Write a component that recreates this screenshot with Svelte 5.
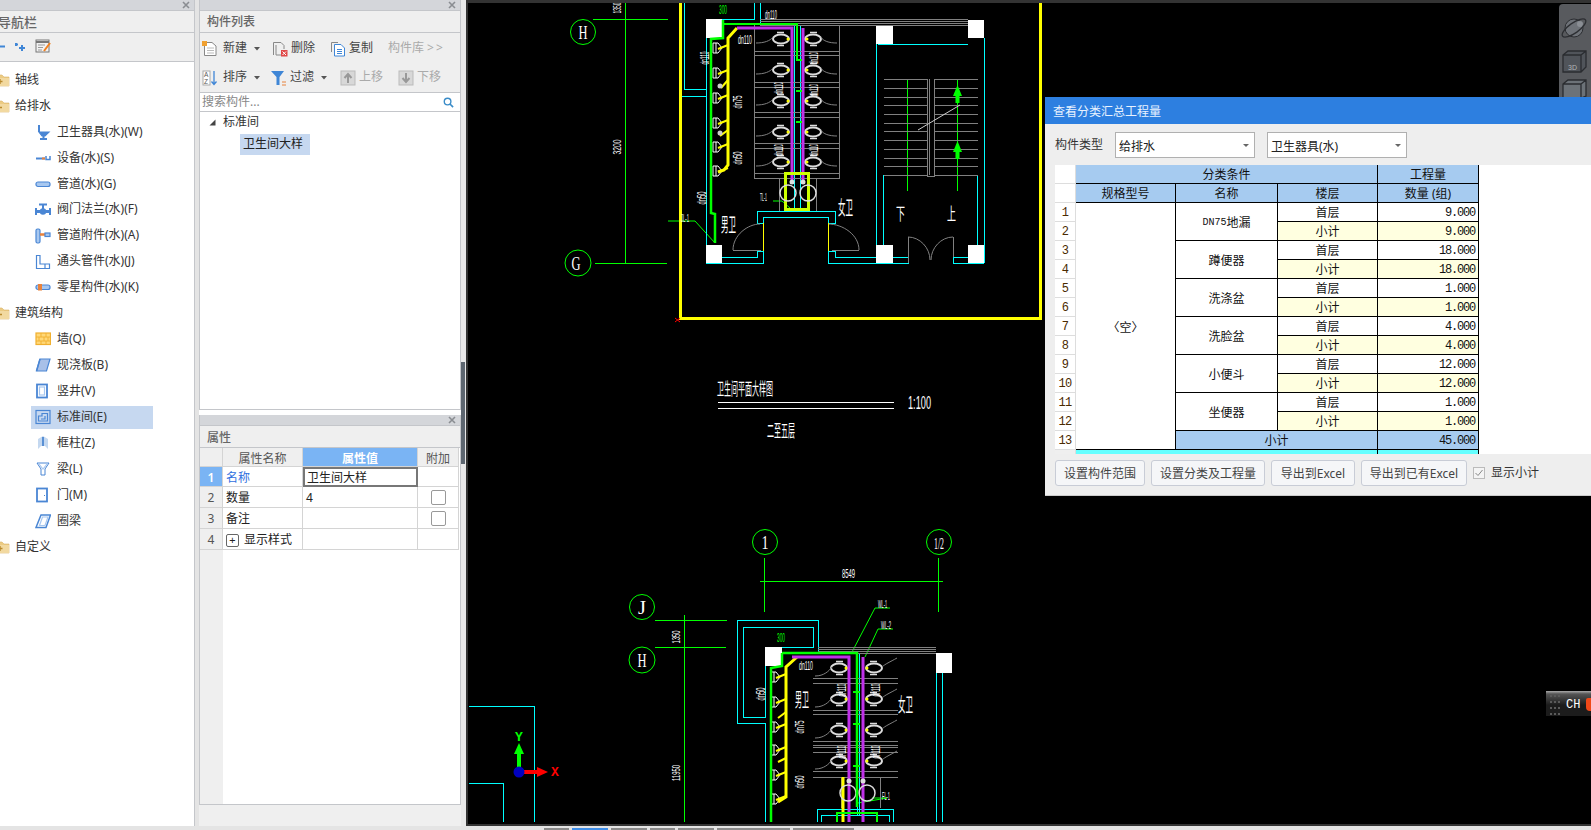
<script>
  const tree = [
    { label: '轴线', top: 'plus' },
    { label: '给排水', top: 'open' },
    { label: '卫生器具(水)(W)', icon: 'sanitary' },
    { label: '设备(水)(S)', icon: 'device' },
    { label: '管道(水)(G)', icon: 'pipe' },
    { label: '阀门法兰(水)(F)', icon: 'valve' },
    { label: '管道附件(水)(A)', icon: 'fitting' },
    { label: '通头管件(水)(J)', icon: 'elbow' },
    { label: '零星构件(水)(K)', icon: 'misc' },
    { label: '建筑结构', top: 'open' },
    { label: '墙(Q)', icon: 'wall' },
    { label: '现浇板(B)', icon: 'slab' },
    { label: '竖井(V)', icon: 'shaft' },
    { label: '标准间(E)', icon: 'room', selected: true },
    { label: '框柱(Z)', icon: 'column' },
    { label: '梁(L)', icon: 'beam' },
    { label: '门(M)', icon: 'door' },
    { label: '圈梁', icon: 'ring' },
    { label: '自定义', top: 'plus' }
  ];

  const groups = [
    { latin: 'DN75', name: '地漏', value: '9.000' },
    { name: '蹲便器', value: '18.000' },
    { name: '洗涤盆', value: '1.000' },
    { name: '洗脸盆', value: '4.000' },
    { name: '小便斗', value: '12.000' },
    { name: '坐便器', value: '1.000' }
  ];

  const cyan = [
    '684,3 684,89 706,89', '681,96 706,96', '706,19 706,263 763,263 763,251 757,251 757,257 722,257',
    '706,19 754,19 754,3', '760,3 760,23', '757,211 835,211 835,223 828,223 828,217 763,217 763,223 757,223 757,211',
    '828,263 828,251 835,251 835,257 877,257', '828,263 908,263 908,257 877,257', '876,44 876,245', '883,175 883,245',
    '977,175 977,245', '984,38 984,263', '878,44 968,44', '953,257 968,257', '953,257 953,263 984,263',
    '794,26 794,210', '800,26 800,210', '712,245 712,257',
    '469,706 534,706 534,822', '469,783 503,783 503,822',
    '737,620 818,620 818,651', '737,620 737,723 765,723 765,822', '743,627 813,627 813,647 782,647',
    '743,627 743,717 765,717 765,647', '936,653 936,822', '942,653 942,822', '857,653 857,815', '859,653 859,815',
    '817,822 817,809 893,809 893,822', '821,822 821,815 889,815 889,822', '771,653 782,653'
  ];
  const gray = [
    '754,25 754,178 839,178 839,25', '754,51 839,51', '754,55 839,55', '754,82 839,82', '754,87 839,87', '754,112 839,112',
    '754,117 839,117', '754,143 839,143', '754,148 839,148', '754,173 839,173',
    '779,178 779,211', '816,178 816,211', '733,250 761,250', '832,250 859,250', '908,237 908,263', '953,237 953,257',
    '813,678 898,678', '813,683 898,683', '813,710 898,710', '813,714 898,714', '813,741 898,741', '813,745 898,745',
    '813,747 898,747', '813,752 898,752', '813,771 898,771', '813,777 898,777', '841,777 841,808', '880,777 880,808',
    '760,19 968,19', '760,21 968,21', '760,23 968,23', '760,25 968,25',
    '818,647 936,647', '818,649 936,649', '818,651 936,651', '818,653 936,653'
  ];
  const treads = [79, 88, 97, 105, 114, 123, 131, 140, 149, 158, 166, 175];
  const stallYs = [39, 70, 101, 132, 162];
  const stall2Ys = [668, 699, 730, 761];
  const urinals = [48, 73, 98, 123, 147, 171];
  const urinals2 = [677, 702, 727, 750, 775, 799];
  const rings = [
    [583, 32, 12.5], [578, 263, 13], [765, 542, 12.5], [939, 542, 12.5], [642, 607, 12.5], [642, 660, 13]
  ];
  const ringText = [
    ['H', 583, 39, 18, 9], ['G', 576, 270, 18, 9], ['1', 765, 549, 18, 7], ['1/2', 939, 549, 16, 10], ['J', 642, 614, 18, 8], ['H', 642, 667, 18, 9]
  ];
  const cadV = [
    ['1350', 621, 8, 11, 11, '#fff'], ['3200', 621, 147, 11, 15, '#fff'], ['dn110', 709, 58, 13, 13, '#fff'], ['dn75', 742, 102, 13, 13, '#fff'],
    ['dn50', 742, 158, 13, 13, '#fff'], ['dn50', 706, 198, 13, 13, '#fff'], ['dn110', 818, 58, 13, 12, '#fff'], ['dn110', 783, 88, 13, 12, '#fff'],
    ['dn110', 818, 90, 13, 12, '#fff'], ['dn110', 783, 150, 13, 12, '#fff'], ['dn110', 818, 150, 13, 12, '#fff'],
    ['1350', 680, 637, 11, 13, '#fff'], ['11950', 680, 773, 11, 16, '#fff'], ['dn50', 765, 694, 13, 13, '#fff'], ['dn75', 804, 727, 13, 13, '#fff'],
    ['dn50', 804, 782, 13, 13, '#fff'], ['dn110', 846, 690, 13, 13, '#fff'], ['dn110', 880, 690, 13, 13, '#fff'], ['dn110', 846, 752, 13, 13, '#fff'], ['dn110', 880, 752, 13, 13, '#fff']
  ];
  const cadH = [
    ['300', 719, 14, 13, 8, '#00ff00'], ['dn110', 738, 44, 13, 14, '#fff'], ['dn110', 765, 19, 13, 12, '#fff'], ['TL-1', 760, 201, 11, 7, '#fff'],
    ['JL-1', 681, 222, 11, 8, '#fff'], ['男卫', 721, 232, 19, 15, '#fff'], ['女卫', 838, 215, 19, 15, '#fff'], ['下', 896, 220, 17, 9, '#fff'],
    ['上', 947, 220, 17, 9, '#fff'], ['卫生间平面大样图', 717, 395, 17, 56, '#fff'], ['1:100', 908, 409, 18, 23, '#fff'],
    ['二至五层', 767, 437, 17, 28, '#fff'], ['8549', 842, 578, 13, 13, '#fff'], ['300', 777, 642, 12, 8, '#00ff00'],
    ['WL-1', 878, 608, 11, 9, '#fff'], ['WL-2', 881, 629, 11, 10, '#fff'], ['FL-1', 882, 800, 11, 8, '#fff'], ['男卫', 795, 707, 19, 14, '#fff'],
    ['女卫', 898, 712, 19, 15, '#fff'], ['dn110', 799, 670, 13, 14, '#fff']
  ];
</script>

{#snippet closeX()}
  <svg class="close" viewBox="0 0 8 8" width="8" height="8"><path d="M1 1L7 7M7 1L1 7" stroke="#8a8d92" stroke-width="1.6" /></svg>
{/snippet}

{#snippet folder(kind)}
  <svg class="folder" viewBox="0 0 16 14" width="16" height="14">
    <path d="M0 2H8L10 4H15V13H0Z" fill="#eccb83" stroke="#d9b469" stroke-width=".6" />
    <rect x="0" y="5" width="15" height="8" fill="#f2d9a0" />
    {#if kind === 'plus'}<path d="M6 6V11M3.5 8.5H8.5" stroke="#b98a2e" stroke-width="1.4" />{:else}<path d="M2 8.5H8" stroke="#b98a2e" stroke-width="1.6" />{/if}
  </svg>
{/snippet}

{#snippet icon(name)}
  <svg class="ticon" viewBox="0 0 16 16" width="16" height="16" fill="none" stroke="#4a86d4" stroke-width="1.2">
    {#if name === 'sanitary'}
      <path d="M4 1V8" stroke-width="2" /><path d="M4 8H14L10 12H7Z" fill="#4a86d4" /><path d="M5 15H12" stroke-width="2" /><path d="M8.5 12V15" stroke-width="2" />
    {:else if name === 'device'}
      <path d="M1 8.5H10" stroke-width="2" /><path d="M7 8.5H10" stroke="#e8823c" stroke-width="2" /><path d="M11 6V9.5H15V6" stroke-width="1.5" />
    {:else if name === 'pipe'}
      <rect x="1" y="6" width="14" height="4.5" rx="2" fill="#a8c8f0" />
    {:else if name === 'valve'}
      <path d="M8 3V7M4 2.5H12" stroke-width="2" /><path d="M1 6V13M15 6V13" stroke-width="2" /><path d="M1 9.5H15" stroke-width="3" /><circle cx="8" cy="9.5" r="2.6" fill="#4a86d4" />
    {:else if name === 'fitting'}
      <rect x="1" y="1" width="4" height="14" rx="1.5" fill="#a8c8f0" /><path d="M5 6.5H10" stroke="#e8823c" stroke-width="2.5" /><rect x="10" y="5" width="5" height="3.5" fill="#a8c8f0" />
    {:else if name === 'elbow'}
      <path d="M1.5 1.5H5V10H14.5V14.5H1.5Z" fill="#fff" /><path d="M10 10V14.5" />
    {:else if name === 'misc'}
      <rect x="1" y="6" width="14" height="4.5" rx="2" fill="#a8c8f0" /><rect x="3" y="5" width="4" height="6.5" fill="#e8823c" stroke="none" />
    {:else if name === 'wall'}
      <rect x="1" y="2" width="14.5" height="11.5" fill="#ffd878" stroke="#f0b030" /><path d="M1 6H15M1 10H15M6 2V6M11 2V6M4 6V10M9 6V10M13 6V10M6 10V13.5M11 10V13.5" stroke="#f0b030" stroke-width=".9" />
    {:else if name === 'slab'}
      <path d="M5 2H15L11.5 14H1.5Z" fill="#a8c0e8" /><path d="M5 2L1.5 14" stroke-width="1.5" />
    {:else if name === 'shaft'}
      <rect x="2" y="1.5" width="10" height="13" stroke-width="1.8" /><rect x="4.5" y="4" width="5" height="8" stroke="#a8c8f0" />
    {:else if name === 'room'}
      <rect x="1" y="1.5" width="14" height="13" stroke-width="1.2" /><path d="M3.5 12V7H7V4.5H12.5V12Z" /><path d="M6 10H10V7" />
    {:else if name === 'column'}
      <path d="M3 4L8 1L13 4V14L10 11H6L3 14Z" fill="#c4d8f0" stroke="none" /><path d="M8 2V11" stroke="#5a90d4" stroke-width="2" />
    {:else if name === 'beam'}
      <path d="M2 2H14L10 8V14H6V8Z" stroke-width="1" /><path d="M4 3L8 8L12 3" stroke="#a8c8f0" />
    {:else if name === 'door'}
      <rect x="2" y="1.5" width="10" height="13" stroke-width="1.8" /><path d="M9.5 8V9" stroke-width="1" />
    {:else if name === 'ring'}
      <path d="M6 2H15.5L11 14.5H1Z" stroke-width="1.5" /><path d="M7.5 4H13L10 12.5H4.5Z" stroke="#a8c8f0" />
    {/if}
  </svg>
{/snippet}

{#snippet panelHead(title)}
  <div class="strip">{@render closeX()}</div>
  <div class="phead">{title}</div>
{/snippet}

{#snippet caret()}
  <svg class="caret" viewBox="0 0 6 4" width="6" height="4"><path d="M0 0H6L3 3.5Z" fill="#555" /></svg>
{/snippet}

<div class="app">
  <div class="main">
    <aside class="nav">
      {@render panelHead('导航栏')}
      <div class="navtools">
        <svg viewBox="0 0 54 16" width="54" height="16" fill="none">
          <path d="M0 8.5H5" stroke="#3f86d6" stroke-width="2" />
          <path d="M16 5V8M15 6.5H18M22 7V13M19 10H25" stroke="#3f86d6" stroke-width="2" />
          <rect x="36" y="2" width="13" height="12" fill="#f2f2f2" stroke="#777" />
          <path d="M36 4H49" stroke="#777" stroke-width="2" />
          <path d="M38 7H45M38 9.5H43M38 12H42" stroke="#999" />
          <path d="M44 13L50 5" stroke="#f08020" stroke-width="2" />
        </svg>
      </div>
      <div class="tree">
        {#each tree as row}
          <div class="row" class:toprow={row.top} class:sel={row.selected}>
            {#if row.top}
              {@render folder(row.top)}
            {:else}
              {@render icon(row.icon)}
            {/if}
            <span>{row.label}</span>
          </div>
        {/each}
      </div>
    </aside>

    <div class="mid">
      <section class="listp">
        {@render panelHead('构件列表')}
        <div class="tools">
          <div class="trow">
            <span class="tool w70 first"><svg viewBox="0 0 16 16" width="16" height="16" fill="none"><path d="M2.5 1.5H10L14 5V14.5H2.5Z" fill="#fff" stroke="#888" /><path d="M5 7H12M5 9.5H12M5 12H12" stroke="#bbb" /><rect x="0" y="0" width="5" height="5" fill="#f0a030" /></svg><b>新建</b>{@render caret()}</span>
            <span class="tool w58"><svg viewBox="0 0 16 16" width="16" height="16" fill="none"><path d="M1.5 14V1.5H9L12 4.5V8" stroke="#888" /><path d="M4 4V14H9" stroke="#888" /><rect x="9" y="9" width="6.5" height="6.5" fill="#e04848" /><path d="M10.5 10.5L14 14M14 10.5L10.5 14" stroke="#fff" /></svg><b>删除</b></span>
            <span class="tool w58"><svg viewBox="0 0 16 16" width="16" height="16" fill="none"><path d="M1.5 11V1.5H8" stroke="#888" /><path d="M4.5 3.5H11L14.5 7V15H4.5Z" fill="#fff" stroke="#3f86d6" /><path d="M7 8.5H12M7 10.5H12M7 12.5H12" stroke="#3f86d6" /></svg><b>复制</b></span>
            <span class="tool dim">构件库<em>&gt;&gt;</em></span>
          </div>
          <div class="trow">
            <span class="tool w69 first"><svg viewBox="0 0 16 16" width="16" height="16" fill="none"><rect x="1" y="1" width="7" height="14" fill="#fff" stroke="#aaa" /><text x="2" y="7" class="az">A</text><text x="2" y="14" class="az">Z</text><path d="M12 1V14M9.5 11.5L12 14.5L14.5 11.5" stroke="#3f86d6" stroke-width="1.3" /></svg><b>排序</b>{@render caret()}</span>
            <span class="tool w69"><svg viewBox="0 0 16 16" width="16" height="16" fill="none"><path d="M0 1H13L8.5 7V15H5.5V7Z" fill="#3f86d6" /><path d="M11 12H15M11 15H15" stroke="#e8823c" /></svg><b>过滤</b>{@render caret()}</span>
            <span class="tool w58 dim"><svg viewBox="0 0 16 16" width="16" height="16" fill="none"><rect x="1" y="1" width="14" height="14" fill="#d8d8d8" stroke="#bbb" /><path d="M8 13V5M4.5 8L8 4L11.5 8" stroke="#999" stroke-width="2" /></svg><b>上移</b></span>
            <span class="tool dim"><svg viewBox="0 0 16 16" width="16" height="16" fill="none"><rect x="1" y="1" width="14" height="14" fill="#d8d8d8" stroke="#bbb" /><path d="M8 3V11M4.5 8L8 12L11.5 8" stroke="#999" stroke-width="2" /></svg><b>下移</b></span>
          </div>
        </div>
        <div class="search">
          <span>搜索构件...</span>
          <svg viewBox="0 0 12 12" width="11" height="11" fill="none"><circle cx="5" cy="5" r="3.6" stroke="#3a8cc8" stroke-width="1.5" /><path d="M7.6 7.6L11 11" stroke="#3a8cc8" stroke-width="1.8" /></svg>
        </div>
        <div class="ltree">
          <div class="lroot"><svg viewBox="0 0 7 7" width="7" height="7"><path d="M6.5 0.5V6.5H0.5Z" fill="#444" /></svg><span>标准间</span></div>
          <div class="lchild">卫生间大样</div>
        </div>
      </section>

      <section class="propp">
        {@render panelHead('属性')}
        <div class="ptable">
          <div class="pc head"></div><div class="pc head">属性名称</div><div class="pc head on">属性值</div><div class="pc head">附加</div>
          <div class="pc num on">1</div><div class="pc lab link">名称</div><div class="pc editing">卫生间大样</div><div class="pc"></div>
          <div class="pc num">2</div><div class="pc lab">数量</div><div class="pc lab">4</div><div class="pc ctr"><i class="chk"></i></div>
          <div class="pc num">3</div><div class="pc lab">备注</div><div class="pc"></div><div class="pc ctr"><i class="chk"></i></div>
          <div class="pc num">4</div><div class="pc lab"><i class="plus">+</i>显示样式</div><div class="pc"></div><div class="pc"></div>
        </div>
        <div class="pfill"><div></div></div>
      </section>
      <div class="band"></div>
    </div>

    <div class="split"><div class="thumb"></div></div>

    <div class="canvas">
      <svg class="cad" viewBox="468 3 1123 820" width="1123" height="820" fill="none">
        <g stroke="#00ff00">
          {#each rings as r}<circle cx={r[0]} cy={r[1]} r={r[2]} />{/each}
          <path d="M593 19.5H668M625.5 3V263M595 263.5H667M620 19.5H631M620 263.5H631" />
          <path d="M764.5 558V612M938.5 558V612M760 581.5H943M655 620.5H727M684.5 615V822M655 647.5H726M679 620.5H690M679 647.5H690" />
          <path d="M907.5 80V191M957.5 80V191" />
          <path d="M875 608H890M875 608L852 652M878 629H893M878 629L865 657M668 221H695L715 243M773 201H782L790 208M872 798H887L858 803" />
        </g>
        <g stroke="#00ffff" stroke-width="1" shape-rendering="crispEdges">
          {#each cyan as p}<polyline points={p} />{/each}
        </g>
        <g stroke="#808080" stroke-width="1" shape-rendering="crispEdges">
          {#each gray as p}<polyline points={p} />{/each}
          {#each treads as y}<path d="M884 {y + 0.5}H927M934 {y + 0.5}H978" />{/each}
          <path d="M927 79V176H934V79M929.5 79V175" />
        </g>
        <g stroke="#808080" stroke-width="1">
          <path d="M733 250C733 235 748 224 760 224M828 224C843 224 859 235 859 250M908 237C920 237 930 248 930 260M953 237C941 237 931 248 931 260" />
        </g>
        <path d="M918 130L960 105" stroke="#ccc" />
        <path d="M763 223V251M828 223V251" stroke="#ffff00" shape-rendering="crispEdges" />
        <path d="M680 3V318M1040.5 3V318M679 318.5H1042" stroke="#ffff00" stroke-width="3" shape-rendering="crispEdges" />
        <path d="M718 402.5H894M718 408.5H894" stroke="#fff" stroke-width="1" shape-rendering="crispEdges" />
        <path d="M675 318L680 322M680 318L675 322" stroke="#ff0000" />

        <g fill="#fff">
          <rect x="706" y="19" width="16" height="19" /><rect x="706" y="245" width="16" height="18" />
          <rect x="876" y="245" width="17" height="18" /><rect x="968" y="245" width="16" height="18" />
          <rect x="876" y="26" width="17" height="18" /><rect x="968" y="20" width="16" height="18" />
          <rect x="765" y="647" width="17" height="19" /><rect x="936" y="653" width="16" height="20" />
        </g>

        {#each stallYs as y}
          <g stroke="#ddd">
            <ellipse cx="781" cy={y} rx="8" ry="4.5" stroke-width="2" /><ellipse cx="813" cy={y} rx="8" ry="4.5" stroke-width="2" />
            <path d="M777 {y - 6.5}H784M777 {y + 6.5}H784M810 {y - 6.5}H817M810 {y + 6.5}H817" stroke-width="1.5" />
          </g>
          <path d="M756 {y + 4}C764 {y + 4} 770 {y + 2} 773 {y - 2}M837 {y + 4}C829 {y + 4} 823 {y + 2} 821 {y - 2}" stroke="#808080" />
          <circle cx="788" cy={y} r="1.5" fill="#ffff00" /><circle cx="807" cy={y} r="1.5" fill="#ffff00" />
        {/each}
        {#each stall2Ys as y}
          <g stroke="#ddd">
            <ellipse cx="839" cy={y} rx="8" ry="4.5" stroke-width="2" /><ellipse cx="874" cy={y} rx="8" ry="4.5" stroke-width="2" />
            <path d="M836 {y - 6.5}H843M836 {y + 6.5}H843M870 {y - 6.5}H877M870 {y + 6.5}H877" stroke-width="1.5" />
          </g>
          <path d="M815 {y + 8}C824 {y + 8} 829 {y + 3} 832 {y - 1}M897 {y - 10}C890 {y - 6} 885 {y - 4} 882 {y - 1}" stroke="#808080" />
          <circle cx="846" cy={y} r="1.5" fill="#ffff00" /><circle cx="867" cy={y} r="1.5" fill="#ffff00" />
        {/each}

        {#each urinals as y}
          <path d="M713 {y - 5}H718L722 {y}L718 {y + 5}H713ZM716 {y - 5}V{y + 5}" stroke="#fff" />
          <path d="M718 {y + 1}L728 {y - 3}" stroke="#ffff00" stroke-width="2" />
        {/each}
        {#each urinals2 as y}
          <path d="M771 {y - 5}H776L780 {y}L776 {y + 5}H771ZM774 {y - 5}V{y + 5}" stroke="#fff" />
          <path d="M776 {y + 1}L786 {y - 3}" stroke="#ffff00" stroke-width="2" />
        {/each}

        <path d="M737 28L728 38V165L724 170L718 172" stroke="#ffff00" stroke-width="3" />
        <path d="M797 657L786 667V797L778 802" stroke="#ffff00" stroke-width="3" />
        <path d="M728 80L721 88M728 130L720 136M786 712L778 718M786 758L778 762" stroke="#ffff00" stroke-width="2" />
        <circle cx="720" cy="86" r="2.5" fill="#ccc" /><circle cx="720" cy="133" r="2.5" fill="#ccc" />
        <path d="M737 28H792V180M803 28V180" stroke="#c030e8" stroke-width="3" />
        <path d="M792 657H849V822M863 657V822" stroke="#c030e8" stroke-width="3" />
        <rect x="785.5" y="173.5" width="23" height="36" stroke="#ccff00" stroke-width="3" />
        <path d="M843 777V822" stroke="#ffff00" stroke-width="3" />
        <circle cx="788" cy="193" r="8" stroke="#ddd" stroke-width="1.5" /><circle cx="808" cy="193" r="8" stroke="#ddd" stroke-width="1.5" />
        <circle cx="792" cy="182" r="2.5" fill="#ddd" /><circle cx="803" cy="182" r="2.5" fill="#ddd" />
        <circle cx="848" cy="793" r="8" stroke="#ddd" stroke-width="1.5" /><circle cx="867" cy="793" r="8" stroke="#ddd" stroke-width="1.5" />
        <circle cx="849" cy="781" r="2.5" fill="#ddd" /><circle cx="863" cy="781" r="2.5" fill="#ddd" />

        <path d="M723 20V38L711 39V213L715 214V243" stroke="#00ff00" stroke-width="2.5" />
        <path d="M723 24H797V60" stroke="#00ff00" stroke-width="2" />
        <path d="M782 653H857V807M782 653V666L771 668V822" stroke="#00ff00" stroke-width="2.5" />
        <path d="M796 60H802M796 91H802M796 122H802M853 692H860M853 724H860M853 766H860M837 812V822M837 813H877V822" stroke="#00ff00" stroke-width="2" />
        <path d="M957.5 95V103M957.5 151V159" stroke="#00ff00" stroke-width="4" />
        <path d="M957.5 85L962 96H953ZM957.5 141L962 152H953Z" fill="#00ff00" />

        {#each ringText as t}
          <text x={t[1]} y={t[2]} font-size={t[3]} textLength={t[4]} lengthAdjust="spacingAndGlyphs" class="ct ser" text-anchor="middle">{t[0]}</text>
        {/each}
        {#each cadH as t}
          <text x={t[1]} y={t[2]} font-size={t[3]} textLength={t[4]} lengthAdjust="spacingAndGlyphs" class="ct" fill={t[5]}>{t[0]}</text>
        {/each}
        {#each cadV as t}
          <text transform="rotate(-90 {t[1]} {t[2]})" x={t[1] - t[4] / 2} y={t[2]} font-size={t[3]} textLength={t[4]} lengthAdjust="spacingAndGlyphs" class="ct" fill={t[5]}>{t[0]}</text>
        {/each}

        <path d="M519 772V754" stroke="#00ff00" stroke-width="4" /><path d="M519 743L524 754H514Z" fill="#00ff00" />
        <path d="M519 772H537" stroke="#ff0000" stroke-width="4" /><path d="M548 772L537 767V777Z" fill="#ff0000" />
        <circle cx="519" cy="772" r="5.5" fill="#0000c0" />
        <text x="515" y="741" class="axis" fill="#00ff00">Y</text>
        <text x="551" y="776" class="axis" fill="#ff0000">X</text>
      </svg>

      <div class="gadget">
        <svg viewBox="0 0 32 94" width="32" height="94" fill="none">
          <circle cx="15" cy="24" r="9" fill="#6e7278" stroke="#2c2e32" />
          <ellipse cx="15" cy="24" rx="14" ry="5" transform="rotate(-35 15 24)" stroke="#2c2e32" stroke-width="1.3" />
          <circle cx="21" cy="20" r="3" fill="#8a8e94" />
          <path d="M4 51L9 47H27V63L22 68H4ZM4 51H22V68M22 51L27 47" fill="#50545a" stroke="#2a2c30" stroke-width="1.3" />
          <text x="9" y="66" class="g3d">3D</text>
          <path d="M4 80L9 76H27V92L22 94H4ZM4 80H22V94M22 80L27 76" fill="#6c7278" stroke="#2a2c30" stroke-width="1.3" />
        </svg>
      </div>

      <div class="dialog">
        <div class="dtitle">查看分类汇总工程量</div>
        <div class="dform">
          <span class="dlabel">构件类型</span>
          <div class="combo w140">给排水<i></i></div>
          <div class="combo w140">卫生器具(水)<i></i></div>
        </div>
        <div class="dbody">
          <div class="sheet">
            <div class="c rn"></div><div class="c hd s3">分类条件</div><div class="c hd">工程量</div>
            <div class="c rn"></div><div class="c hd">规格型号</div><div class="c hd">名称</div><div class="c hd">楼层</div><div class="c hd">数量 (组)</div>
            {#each groups as g, i}
              <div class="c rn">{i * 2 + 1}</div>
              {#if i === 0}<div class="c spec">〈空〉</div>{/if}
              <div class="c nm">{#if g.latin}<span class="latin">{g.latin}</span>{/if}{g.name}</div>
              <div class="c">首层</div><div class="c val">{g.value}</div>
              <div class="c rn">{i * 2 + 2}</div>
              <div class="c yl">小计</div><div class="c val yl">{g.value}</div>
            {/each}
            <div class="c rn">13</div><div class="c hd s2">小计</div><div class="c val hd">45.000</div>
            <div class="c rn last"></div><div class="c cy s3"></div><div class="c cy"></div>
          </div>
        </div>
        <div class="dfoot">
          <button class="b90">设置构件范围</button>
          <button class="b114">设置分类及工程量</button>
          <button class="b83">导出到Excel</button>
          <button class="b106">导出到已有Excel</button>
          <i class="tick"><svg viewBox="0 0 10 10" width="10" height="10" fill="none"><path d="M1.5 5L4 7.5L8.5 2" stroke="#888" /></svg></i>
          <span class="ticklabel">显示小计</span>
        </div>
      </div>

      <div class="tray">
        <svg viewBox="0 0 10 20" width="10" height="20"><g fill="#5a5a5a">
          <rect x="0" y="0" width="2" height="2" /><rect x="4" y="0" width="2" height="2" /><rect x="8" y="0" width="2" height="2" />
          <rect x="0" y="6" width="2" height="2" /><rect x="4" y="6" width="2" height="2" /><rect x="8" y="6" width="2" height="2" />
          <rect x="0" y="12" width="2" height="2" /><rect x="4" y="12" width="2" height="2" /><rect x="8" y="12" width="2" height="2" />
          <rect x="0" y="18" width="2" height="2" /><rect x="4" y="18" width="2" height="2" /><rect x="8" y="18" width="2" height="2" /></g></svg>
        <span>CH</span>
        <i></i>
      </div>
    </div>
  </div>
  <div class="tabs">
    <span class="t1"></span><span class="t2"></span><span class="t3"></span><span class="t4"></span><span class="t5"></span><span class="t6"></span><span class="t7"></span>
  </div>
</div>

<style>
  :global(body) { margin: 0; overflow: hidden; background: #e4e4e4; }
  .app { width: 1591px; height: 830px; display: flex; flex-direction: column; overflow: hidden; font: 12px/1.2 "Noto Sans", "Noto Sans CJK SC", sans-serif; color: #333; }
  .main { display: flex; height: 826px; flex: none; }
  .nav { width: 194px; flex: none; border-right: 1px solid #c4c6ca; background: #fff; display: flex; flex-direction: column; overflow: hidden; margin-right: 4px; }
  .strip { height: 10px; background: #d4d6da; border-bottom: 1px solid #c4c6ca; flex: none; display: flex; justify-content: flex-end; align-items: center; padding-right: 4px; }
  .close { display: block; }
  .phead { height: 21px; flex: none; background: #efefef; border-bottom: 1px solid #c4c6ca; color: #666; font-size: 12px; font-weight: 500; line-height: 22px; padding-left: 7px; }
  .nav .phead { padding-left: 0; text-indent: -2px; font-size: 13px; }
  .propp .phead { line-height: 24px; }
  .navtools { height: 29px; flex: none; background: #efefef; border-bottom: 1px solid #c4c6ca; display: flex; align-items: center; padding-bottom: 2px; box-sizing: border-box; }
  .navtools svg { display: block; }
  .tree { padding-top: 5px; }
  .row { height: 25.95px; display: flex; align-items: center; gap: 6px; width: 122px; margin-left: 31px; padding-left: 4px; box-sizing: border-box; white-space: nowrap; color: #333; }
  .row.toprow { margin-left: -6px; padding-left: 0; gap: 5px; width: 150px; }
  .row.sel { background: #c6d8f0; height: 23px; margin-top: 1.47px; margin-bottom: 1.48px; }
  .folder, .ticon { flex: none; display: block; }

  .mid { width: 262px; flex: none; display: flex; flex-direction: column; background: #fff; }
  .listp { height: 410px; flex: none; box-sizing: border-box; border: solid #c4c6ca; border-width: 0 1px 1px 1px; margin-bottom: 5px; display: flex; flex-direction: column; }
  .tools { height: 58px; flex: none; background: #efefef; border-bottom: 1px solid #c4c6ca; padding: 1px 0 0 2px; display: flex; flex-direction: column; }
  .trow { height: 29px; display: flex; align-items: center; }
  .tool { display: flex; align-items: center; gap: 3px; white-space: nowrap; flex: none; }
  .tool.first { gap: 5px; }
  .tool b { font-weight: 400; color: #444; }
  .tool em { font-style: normal; letter-spacing: 2px; }
  .tool svg { flex: none; display: block; }
  .w70 { width: 70px; }
  .w69 { width: 69px; }
  .w58 { width: 58px; }
  .dim, .tool.dim b { color: #aaa; }
  .caret { margin-left: 4px; }
  .first .caret { margin-left: 2px; }
  .az { font: 6.5px "Liberation Sans", sans-serif; fill: #555; }
  .search { height: 18px; flex: none; background: #fff; border-bottom: 1px solid #c4c6ca; display: flex; justify-content: space-between; align-items: center; padding: 0 6px 0 2px; color: #888; }
  .ltree { background: #fff; }
  .lroot { display: flex; align-items: center; height: 21px; padding-left: 9px; gap: 7px; color: #333; }
  .lchild { margin-left: 40px; margin-top: 1px; width: 70px; height: 21px; box-sizing: border-box; background: #c6d8f0; line-height: 20px; padding-left: 3px; color: #222; }

  .propp { height: 390px; flex: none; box-sizing: border-box; border: solid #c4c6ca; border-width: 0 1px 1px 1px; display: flex; flex-direction: column; }
  .ptable { display: grid; grid-template-columns: 23px 80px 115px 41px; grid-template-rows: 19px 20px 21px 21px 21px; flex: none; background: #fff; }
  .pc { border-right: 1px solid #d4d4d4; border-bottom: 1px solid #d4d4d4; box-sizing: border-box; line-height: 21px; white-space: nowrap; color: #222; }
  .pc.head { background: #efefef; text-align: center; color: #555; line-height: 21px; }
  .pc.on { background: #7ab4f4; color: #fff; font-weight: 600; }
  .pc.num { background: #efefef; text-align: center; color: #555; }
  .pc.num.on { background: #7ab4f4; color: #fff; }
  .lab { padding-left: 3px; }
  .link { color: #3070e0; }
  .editing { border: 2px solid #777; padding-left: 2px; line-height: 18px; background: #fff; }
  .ctr { display: flex; justify-content: center; align-items: center; }
  .chk { width: 13px; height: 13px; border: 1px solid #999; border-radius: 2px; display: block; }
  .plus { display: inline-block; width: 11px; height: 11px; border: 1px solid #666; border-radius: 2px; font-style: normal; font-size: 11px; line-height: 10px; text-align: center; margin-right: 5px; vertical-align: 0; }
  .pfill { flex: 1; }
  .pfill div { width: 23px; height: 100%; background: #efefef; }
  .band { flex: 1; background: #efefef; }

  .split { width: 5px; flex: none; background: #e8e8e8; }
  .thumb { margin-top: 362px; height: 102px; width: 4px; background: #5d6670; }

  .canvas { flex: 1; box-sizing: border-box; background: #000; border: solid #333; border-width: 3px 0 2px 2px; position: relative; overflow: hidden; }
  .cad { position: absolute; left: 0; top: 0; display: block; }
  .ct { font-family: "Liberation Sans", "Noto Sans CJK SC", sans-serif; }
  .ser { font-family: "Liberation Serif", serif; fill: #fff; }
  .axis { font: bold 13px "Liberation Mono", monospace; }

  .gadget { position: absolute; right: 0; top: 1px; width: 32px; height: 94px; background: #585a5e; border-radius: 4px 0 0 0; }
  .gadget svg { display: block; }
  .g3d { font: 7px "Liberation Sans", sans-serif; fill: #b0b4b8; }

  .dialog { position: absolute; left: 577px; top: 94px; width: 546px; height: 398px; background: #eee; border-bottom: 1px solid #ccc; color: #111; display: flex; flex-direction: column; }
  .dtitle { height: 27px; flex: none; background: #2d7fe0; color: #e8f2ff; line-height: 29px; padding-left: 8px; font-size: 12px; }
  .dform { height: 41px; flex: none; display: flex; align-items: center; padding: 0 0 0 10px; }
  .dlabel { width: 60px; color: #333; padding-top: 2px; }
  .combo { height: 26px; box-sizing: border-box; border: 1px solid #b0b0b0; background: #fff; line-height: 27px; padding-left: 3px; position: relative; color: #222; }
  .w140 { width: 140px; margin-right: 12px; }
  .combo i { position: absolute; right: 5px; top: 11px; border: solid transparent; border-width: 3px 3px 0; border-top-color: #666; width: 0; height: 0; }
  .dbody { height: 289px; flex: none; background: #fff; position: relative; overflow: hidden; border-left: 10px solid #eee; }
  .sheet { display: grid; grid-template-columns: 21px 100px 102px 100px 101px; grid-template-rows: repeat(15, 19px) 5px; width: max-content; }
  .c { box-sizing: border-box; border-right: 1px solid #000; border-bottom: 1px solid #000; background: #fff; text-align: center; line-height: 20px; color: #111; white-space: nowrap; }
  .hd { background: #a6cbf0; color: #111; }
  .s3 { grid-column: span 3; }
  .s2 { grid-column: span 2; }
  .rn { border-right: 1px solid #ddd; border-bottom: 1px solid #ddd; font: 12px/20px "Liberation Mono", monospace; color: #4a2a00; letter-spacing: -.6px; }
  .rn.last { border-bottom: 0; background: #efefef; }
  .spec { grid-row: span 13; display: flex; align-items: center; justify-content: center; padding-top: 3px; }
  .nm { grid-row: span 2; display: flex; align-items: center; justify-content: center; padding-top: 2px; }
  .latin { font: 10px "Liberation Mono", monospace; }
  .yl { background: #ffffe0; }
  .val { text-align: right; padding-right: 3px; font: 12px/20px "Liberation Mono", monospace; letter-spacing: -1.2px; }
  .cy { background: #66ffff; border-bottom: 0; }
  .dfoot { flex: 1; display: flex; align-items: center; padding: 0 0 3px 10px; }
  .dfoot button { height: 26px; box-sizing: border-box; background: #f5f6f8; border: 1px solid #c8ccd6; border-radius: 3px; color: #444; font: 12px "Noto Sans", "Noto Sans CJK SC", sans-serif; padding: 0; margin-right: 6px; white-space: nowrap; }
  .dfoot .b90 { width: 90px; }
  .dfoot .b114 { width: 114px; }
  .dfoot .b83 { width: 84px; }
  .dfoot .b106 { width: 106px; }
  .tick { width: 12px; height: 12px; background: #f4f4f4; border: 1px solid #bbb; box-sizing: border-box; display: flex; align-items: center; justify-content: center; margin-right: 6px; }
  .ticklabel { color: #333; padding-top: 1px; }

  .tray { position: absolute; right: 0; top: 688px; width: 45px; height: 25px; background: linear-gradient(#aaa 0, #555 3px, #1c1c1c 14px); display: flex; align-items: center; padding: 2px 0 0 4px; box-sizing: border-box; gap: 6px; overflow: hidden; }
  .tray svg { flex: none; display: block; }
  .tray span { font: 12px "Liberation Mono", monospace; color: #fff; flex: none; }
  .tray i { width: 5px; height: 13px; background: #f04818; flex: none; border-radius: 2px 0 0 4px; }

  .tabs { flex: 1; background: #e4e4e4; display: flex; align-items: flex-end; gap: 3px; padding-left: 544px; }
  .tabs span { height: 2px; background: #8a8a8a; display: block; }
  .t1 { width: 25px; }
  .tabs .t2 { width: 36px; background: #3f8ee8; }
  .t3 { width: 36px; }
  .t4 { width: 25px; }
  .t5 { width: 36px; }
  .t6 { width: 73px; }
  .t7 { width: 61px; }
</style>
